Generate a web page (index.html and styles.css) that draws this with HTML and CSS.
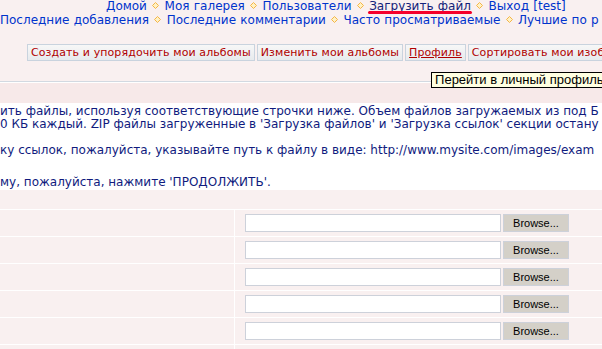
FILE: index.html
```html
<!DOCTYPE html>
<html lang="ru">
<head>
  <meta charset="UTF-8">
  <title>Загрузить файл</title>
  <link rel="stylesheet" href="styles.css">
</head>
<body>
  <div class="topnav">
    <div class="nav-line nav-main">
      <a href="#">Домой</a>
      <svg class="dot" viewBox="0 0 7 7"><path d="M3.5 0.5 L6.5 3.5 L3.5 6.5 L0.5 3.5Z"/></svg>
      <a href="#">Моя галерея</a>
      <svg class="dot" viewBox="0 0 7 7"><path d="M3.5 0.5 L6.5 3.5 L3.5 6.5 L0.5 3.5Z"/></svg>
      <a href="#">Пользователи</a>
      <svg class="dot" viewBox="0 0 7 7"><path d="M3.5 0.5 L6.5 3.5 L3.5 6.5 L0.5 3.5Z"/></svg>
      <a href="#" class="current">Загрузить файл</a>
      <svg class="dot" viewBox="0 0 7 7"><path d="M3.5 0.5 L6.5 3.5 L3.5 6.5 L0.5 3.5Z"/></svg>
      <a href="#">Выход [test]</a>
    </div>
    <div class="nav-line">
      <a href="#">Последние добавления</a>
      <svg class="dot" viewBox="0 0 7 7"><path d="M3.5 0.5 L6.5 3.5 L3.5 6.5 L0.5 3.5Z"/></svg>
      <a href="#">Последние комментарии</a>
      <svg class="dot" viewBox="0 0 7 7"><path d="M3.5 0.5 L6.5 3.5 L3.5 6.5 L0.5 3.5Z"/></svg>
      <a href="#">Часто просматриваемые</a>
      <svg class="dot" viewBox="0 0 7 7"><path d="M3.5 0.5 L6.5 3.5 L3.5 6.5 L0.5 3.5Z"/></svg>
      <a href="#">Лучшие по р</a>
    </div>
  </div>

  <div class="tabs">
    <a href="#" class="tab">Создать и упорядочить мои альбомы</a>
    <a href="#" class="tab">Изменить мои альбомы</a>
    <a href="#" class="tab tab-hover">Профиль<span class="tooltip">Перейти в личный профиль</span></a>
    <a href="#" class="tab">Сортировать мои изобра</a>
  </div>

  <div class="upload">
    <div class="upload-head"></div>
    <div class="upload-info">
      <p>ить файлы, используя соответствующие строчки ниже. Объем файлов загружаемых из под Б<br>0 КБ каждый. ZIP файлы загруженные в 'Загрузка файлов' и 'Загрузка ссылок' секции остану</p>
      <p>ку ссылок, пожалуйста, указывайте путь к файлу в виде: http://www.mysite.com/images/exam</p>
      <p>му, пожалуйста, нажмите 'ПРОДОЛЖИТЬ'.</p>
    </div>
    <div class="upload-gap"></div>
    <div class="file-row"><div class="file-label"></div><div class="file-field"><span class="file-input"></span><span class="file-btn">Browse...</span></div></div>
    <div class="file-row"><div class="file-label"></div><div class="file-field"><span class="file-input"></span><span class="file-btn">Browse...</span></div></div>
    <div class="file-row"><div class="file-label"></div><div class="file-field"><span class="file-input"></span><span class="file-btn">Browse...</span></div></div>
    <div class="file-row"><div class="file-label"></div><div class="file-field"><span class="file-input"></span><span class="file-btn">Browse...</span></div></div>
    <div class="file-row"><div class="file-label"></div><div class="file-field"><span class="file-input"></span><span class="file-btn">Browse...</span></div></div>
    <div class="file-row"><div class="file-label"></div><div class="file-field"></div></div>
  </div>
</body>
</html>
```

FILE: styles.css
```css
body {
  margin: 0;
  background-color: #f9f0f0;
  font-family: "DejaVu Sans", Verdana, sans-serif;
  overflow: hidden;
}

.topnav {
  font-size: 12px;
  line-height: 14px;
  word-spacing: 0.5px;
  white-space: nowrap;
  overflow: hidden;
  margin-top: -1px;
}

.nav-main {
  padding-left: 106px;
}

.nav-line a {
  color: #0033cc;
  text-decoration: none;
}

.nav-line a.current {
  position: relative;
  color: #14237a;
  text-decoration: underline;
}

.nav-line a.current::after {
  content: "";
  position: absolute;
  left: -1px;
  right: -1px;
  top: 12px;
  height: 3px;
  border-radius: 2px;
  background-color: #f5002a;
}

.dot {
  width: 7px;
  height: 7px;
  margin: 0 1px;
  vertical-align: 1px;
}

.dot path {
  fill: #fff1c4;
  stroke: #f4b547;
  stroke-width: 1;
}

.tabs {
  display: flex;
  gap: 2px;
  padding-left: 27px;
  margin-top: 17px;
  white-space: nowrap;
}

.tab {
  position: relative;
  font-size: 11px;
  letter-spacing: 0.1px;
  line-height: 15px;
  padding: 0 3px;
  border: 1px solid #c9d3de;
  background: linear-gradient(#f7f7f7, #e7eaed);
  color: #b00000;
  text-decoration: none;
}

.tab-hover {
  text-decoration: underline;
}

.tooltip {
  position: absolute;
  left: 25px;
  top: 27px;
  z-index: 10;
  padding: 0 3px;
  border: 1px solid #000;
  background-color: #ffffe1;
  color: #000;
  font-family: "Liberation Sans", Tahoma, sans-serif;
  font-size: 13px;
  letter-spacing: 0;
  line-height: 14px;
  text-decoration: none;
}

.upload {
  margin-top: 20px;
  border-top: 1px solid #d2d9e1;
  box-shadow: inset 0 1px 0 #fff;
  padding-top: 1px;
}

.upload-head {
  height: 20px;
  background-color: #f7e9e9;
}

.upload-info {
  height: 87px;
  padding-top: 2px;
  box-sizing: border-box;
  background-color: #fff;
  color: #101b7e;
  font-size: 12px;
  line-height: 13px;
  white-space: nowrap;
  overflow: hidden;
}

.upload-info p {
  margin: 0 0 13px;
}

.upload-info p + p {
  margin-bottom: 19px;
}

.upload-info p:last-child {
  margin: 0;
}

.upload-gap {
  height: 19px;
}

.file-row {
  display: flex;
  height: 26px;
  border-top: 1px solid #fff;
}

.file-label {
  width: 234px;
  border-right: 1px solid #fff;
}

.file-field {
  display: flex;
  align-items: flex-start;
  gap: 2px;
  padding: 4px 0 0 10px;
}

.file-input {
  width: 254px;
  height: 16px;
  border: 1px solid #cdd1da;
  background-color: #fff;
}

.file-btn {
  width: 64px;
  height: 16px;
  border: 1px solid #cdd1da;
  background-color: #d4d0c8;
  color: #000;
  font-family: "Liberation Sans", Tahoma, sans-serif;
  font-size: 11px;
  line-height: 16px;
  text-align: center;
}
```
